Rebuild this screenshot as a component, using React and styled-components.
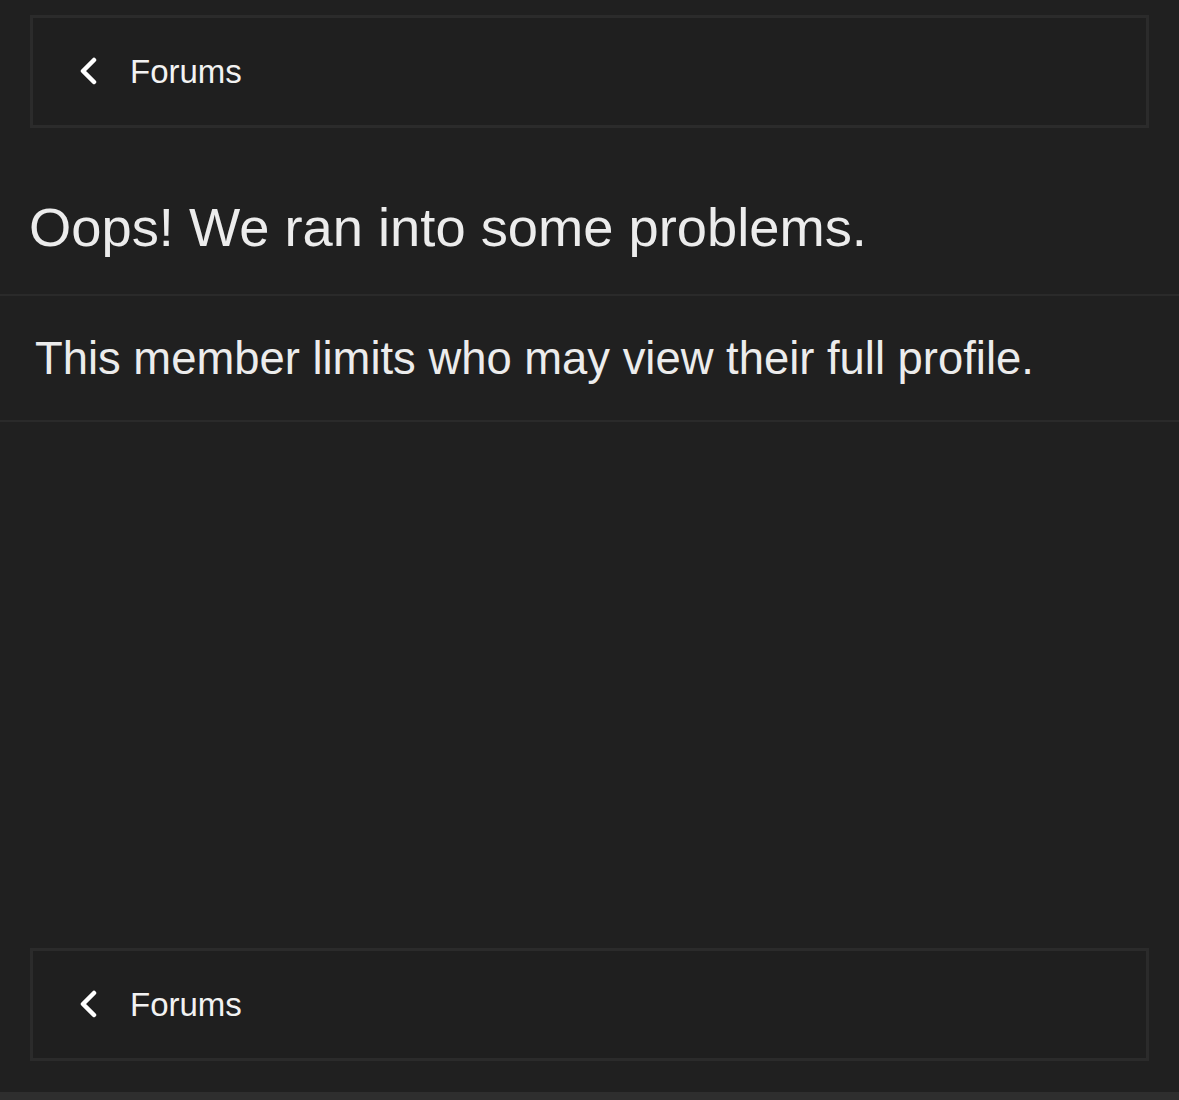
import React from "react";
import styled, { createGlobalStyle } from "styled-components";

const Global = createGlobalStyle`
  html, body { margin: 0; padding: 0; background: #202020; }
  body { font-family: "Liberation Sans", Arial, Helvetica, sans-serif; color: #ededed; }
`;

const Page = styled.div`
  min-height: 1100px;
  display: flex;
  flex-direction: column;
  background: #202020;
`;

const NavBox = styled.a`
  display: flex;
  align-items: center;
  box-sizing: border-box;
  height: 113px;
  margin: ${(p) => (p.$bottom ? "0 30px 31px" : "15px 30px 0")};
  border: 3px solid #2b2b2b;
  background: #1f1f1f;
  padding-left: 46px;
  gap: 31px;
  color: #f2f2f2;
  text-decoration: none;
  font-size: 33px;
`;

const Chevron = styled.svg`
  width: 20px;
  height: 30px;
  flex: none;
`;

const Title = styled.h1`
  margin: 0;
  padding: 67px 28px 34px 29px;
  font-size: 54.3px;
  font-weight: 400;
  line-height: 1.2;
  color: #ececec;
  border-bottom: 2px solid #2a2a2a;
`;

const Message = styled.div`
  padding: 36px 35px 33px;
  font-size: 45.4px;
  line-height: 1.2;
  color: #ececec;
  border-bottom: 2px solid #2a2a2a;
`;

const Spacer = styled.div`
  flex: 1;
`;

const Footer = styled.div`
  height: 8px;
  flex: none;
  background: #2e2e2e;
`;

const Back = ({ bottom }) => (
  <NavBox href="#" $bottom={bottom}>
    <Chevron viewBox="0 0 20 30">
      <polyline
        points="15,3 4,14 15,25"
        fill="none"
        stroke="#ffffff"
        strokeWidth="4.5"
        strokeLinecap="round"
        strokeLinejoin="round"
      />
    </Chevron>
    <span>Forums</span>
  </NavBox>
);

export default function App() {
  return (
    <>
      <Global />
      <Page>
        <Back />
        <Title>Oops! We ran into some problems.</Title>
        <Message>This member limits who may view their full profile.</Message>
        <Spacer />
        <Back bottom />
        <Footer />
      </Page>
    </>
  );
}
